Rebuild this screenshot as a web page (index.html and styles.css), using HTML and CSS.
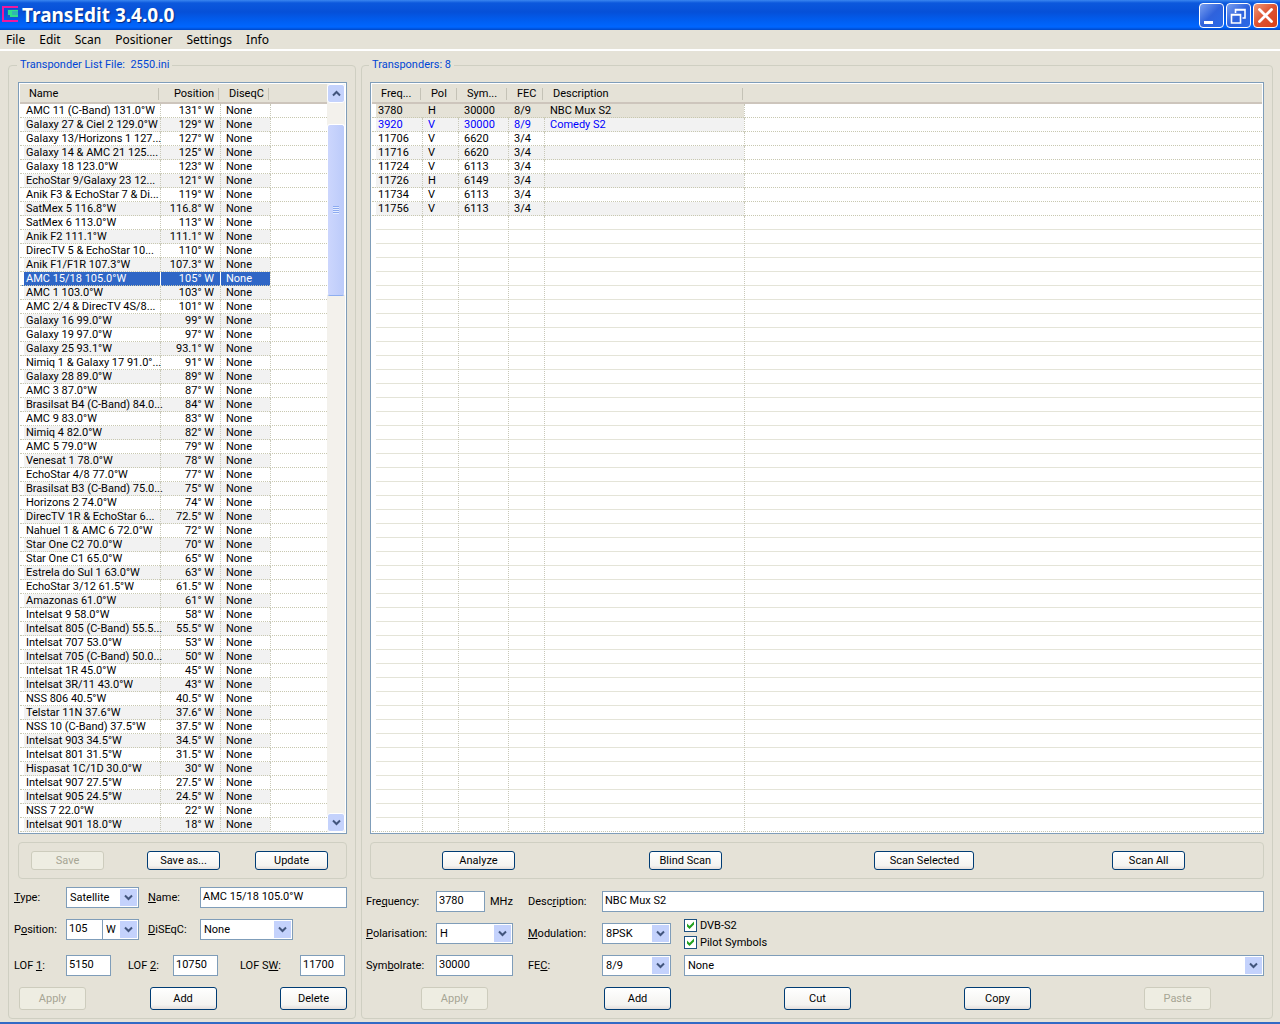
FILE: index.html
```html
<!DOCTYPE html>
<html lang="en">
<head>
<meta charset="utf-8">
<title>TransEdit 3.4.0.0</title>
<link rel="stylesheet" href="styles.css">
</head>
<body>
<header class="titlebar">
  <svg class="app-icon" width="16" height="16" viewBox="0 0 16 16"><path d="M16 1H1v14h15" fill="none" stroke="#f0189c" stroke-width="2"/><path d="M5 3h11v9H5z" fill="#1a5ac8"/><path d="M6 4h10v7H8V9H6z" fill="#2ee08c"/><path d="M10 5h6v4h-6z" fill="#30b8b0"/></svg>
  <h1 class="title">TransEdit 3.4.0.0</h1>
  <div class="window-buttons">
    <button type="button" class="winbtn" aria-label="Minimize"><svg width="23" height="23" viewBox="0 0 23 23"><path d="M4 17h9v3H4z" fill="#fff"/></svg></button>
    <button type="button" class="winbtn" aria-label="Restore"><svg width="23" height="23" viewBox="0 0 23 23"><path d="M8.500 9V5.500H18V14h-2.500M8 6h10M4.500 10.500h9V19h-9zM4 11h10" fill="none" stroke="#fff" stroke-width="1.600"/></svg></button>
    <button type="button" class="winbtn close" aria-label="Close"><svg width="23" height="23" viewBox="0 0 23 23"><path d="M5.500 5.500l12 12M17.500 5.500l-12 12" fill="none" stroke="#fff" stroke-width="2.800" stroke-linecap="round"/></svg></button>
  </div>
</header>
<nav class="menubar">
  <a href="#file">File</a><a href="#edit">Edit</a><a href="#scan">Scan</a><a href="#positioner">Positioner</a><a href="#settings">Settings</a><a href="#info">Info</a>
</nav>
<main class="panels">
  <fieldset class="group sat-group">
    <legend>Transponder List File:&nbsp; 2550.ini</legend>
    <div class="listbox">
      <table class="list satellites">
        <colgroup><col class="c-name"><col class="c-pos"><col class="c-diseqc"><col></colgroup>
        <thead><tr><th>Name</th><th class="num">Position</th><th>DiseqC</th><th></th></tr></thead>
        <tbody>
          <tr><td>AMC 11 (C-Band) 131.0°W</td><td>131° W</td><td>None</td><td></td></tr>
          <tr><td>Galaxy 27 &amp; Ciel 2 129.0°W</td><td>129° W</td><td>None</td><td></td></tr>
          <tr><td>Galaxy 13/Horizons 1 127...</td><td>127° W</td><td>None</td><td></td></tr>
          <tr><td>Galaxy 14 &amp; AMC 21 125....</td><td>125° W</td><td>None</td><td></td></tr>
          <tr><td>Galaxy 18 123.0°W</td><td>123° W</td><td>None</td><td></td></tr>
          <tr><td>EchoStar 9/Galaxy 23 12...</td><td>121° W</td><td>None</td><td></td></tr>
          <tr><td>Anik F3 &amp; EchoStar 7 &amp; Di...</td><td>119° W</td><td>None</td><td></td></tr>
          <tr><td>SatMex 5 116.8°W</td><td>116.8° W</td><td>None</td><td></td></tr>
          <tr><td>SatMex 6 113.0°W</td><td>113° W</td><td>None</td><td></td></tr>
          <tr><td>Anik F2 111.1°W</td><td>111.1° W</td><td>None</td><td></td></tr>
          <tr><td>DirecTV 5 &amp; EchoStar 10...</td><td>110° W</td><td>None</td><td></td></tr>
          <tr><td>Anik F1/F1R 107.3°W</td><td>107.3° W</td><td>None</td><td></td></tr>
          <tr class="selected"><td>AMC 15/18 105.0°W</td><td>105° W</td><td>None</td><td></td></tr>
          <tr><td>AMC 1 103.0°W</td><td>103° W</td><td>None</td><td></td></tr>
          <tr><td>AMC 2/4 &amp; DirecTV 4S/8...</td><td>101° W</td><td>None</td><td></td></tr>
          <tr><td>Galaxy 16 99.0°W</td><td>99° W</td><td>None</td><td></td></tr>
          <tr><td>Galaxy 19 97.0°W</td><td>97° W</td><td>None</td><td></td></tr>
          <tr><td>Galaxy 25 93.1°W</td><td>93.1° W</td><td>None</td><td></td></tr>
          <tr><td>Nimiq 1 &amp; Galaxy 17 91.0°...</td><td>91° W</td><td>None</td><td></td></tr>
          <tr><td>Galaxy 28 89.0°W</td><td>89° W</td><td>None</td><td></td></tr>
          <tr><td>AMC 3 87.0°W</td><td>87° W</td><td>None</td><td></td></tr>
          <tr><td>Brasilsat B4 (C-Band) 84.0...</td><td>84° W</td><td>None</td><td></td></tr>
          <tr><td>AMC 9 83.0°W</td><td>83° W</td><td>None</td><td></td></tr>
          <tr><td>Nimiq 4 82.0°W</td><td>82° W</td><td>None</td><td></td></tr>
          <tr><td>AMC 5 79.0°W</td><td>79° W</td><td>None</td><td></td></tr>
          <tr><td>Venesat 1 78.0°W</td><td>78° W</td><td>None</td><td></td></tr>
          <tr><td>EchoStar 4/8 77.0°W</td><td>77° W</td><td>None</td><td></td></tr>
          <tr><td>Brasilsat B3 (C-Band) 75.0...</td><td>75° W</td><td>None</td><td></td></tr>
          <tr><td>Horizons 2 74.0°W</td><td>74° W</td><td>None</td><td></td></tr>
          <tr><td>DirecTV 1R &amp; EchoStar 6...</td><td>72.5° W</td><td>None</td><td></td></tr>
          <tr><td>Nahuel 1 &amp; AMC 6 72.0°W</td><td>72° W</td><td>None</td><td></td></tr>
          <tr><td>Star One C2 70.0°W</td><td>70° W</td><td>None</td><td></td></tr>
          <tr><td>Star One C1 65.0°W</td><td>65° W</td><td>None</td><td></td></tr>
          <tr><td>Estrela do Sul 1 63.0°W</td><td>63° W</td><td>None</td><td></td></tr>
          <tr><td>EchoStar 3/12 61.5°W</td><td>61.5° W</td><td>None</td><td></td></tr>
          <tr><td>Amazonas 61.0°W</td><td>61° W</td><td>None</td><td></td></tr>
          <tr><td>Intelsat 9 58.0°W</td><td>58° W</td><td>None</td><td></td></tr>
          <tr><td>Intelsat 805 (C-Band) 55.5...</td><td>55.5° W</td><td>None</td><td></td></tr>
          <tr><td>Intelsat 707 53.0°W</td><td>53° W</td><td>None</td><td></td></tr>
          <tr><td>Intelsat 705 (C-Band) 50.0...</td><td>50° W</td><td>None</td><td></td></tr>
          <tr><td>Intelsat 1R 45.0°W</td><td>45° W</td><td>None</td><td></td></tr>
          <tr><td>Intelsat 3R/11 43.0°W</td><td>43° W</td><td>None</td><td></td></tr>
          <tr><td>NSS 806 40.5°W</td><td>40.5° W</td><td>None</td><td></td></tr>
          <tr><td>Telstar 11N 37.6°W</td><td>37.6° W</td><td>None</td><td></td></tr>
          <tr><td>NSS 10 (C-Band) 37.5°W</td><td>37.5° W</td><td>None</td><td></td></tr>
          <tr><td>Intelsat 903 34.5°W</td><td>34.5° W</td><td>None</td><td></td></tr>
          <tr><td>Intelsat 801 31.5°W</td><td>31.5° W</td><td>None</td><td></td></tr>
          <tr><td>Hispasat 1C/1D 30.0°W</td><td>30° W</td><td>None</td><td></td></tr>
          <tr><td>Intelsat 907 27.5°W</td><td>27.5° W</td><td>None</td><td></td></tr>
          <tr><td>Intelsat 905 24.5°W</td><td>24.5° W</td><td>None</td><td></td></tr>
          <tr><td>NSS 7 22.0°W</td><td>22° W</td><td>None</td><td></td></tr>
          <tr><td>Intelsat 901 18.0°W</td><td>18° W</td><td>None</td><td></td></tr>
        </tbody>
      </table>
      <div class="scrollbar">
        <button type="button" class="scroll-btn" aria-label="Scroll up"><svg width="9" height="7" viewBox="0 0 9 7"><path d="M1 5.500L4.500 2 8 5.500" fill="none" stroke="#42557d" stroke-width="2"/></svg></button>
        <div class="track"><div class="thumb"><span class="grip"></span></div></div>
        <button type="button" class="scroll-btn" aria-label="Scroll down"><svg width="9" height="7" viewBox="0 0 9 7"><path d="M1 1.500L4.500 5 8 1.500" fill="none" stroke="#42557d" stroke-width="2"/></svg></button>
      </div>
    </div>
    <div class="toolbar list-tools">
      <button type="button" class="btn" disabled>Save</button>
      <button type="button" class="btn">Save as...</button>
      <button type="button" class="btn">Update</button>
    </div>
    <form class="form sat-form">
      <div class="row names">
        <label for="type"><u>T</u>ype:</label>
        <span class="combo"><select id="type"><option>Satellite</option></select><svg class="arrow" width="17" height="17" viewBox="0 0 17 17"><path d="M5 6.500L8.500 10 12 6.500" fill="none" stroke="#42557d" stroke-width="2"/></svg></span>
        <label for="name"><u>N</u>ame:</label>
        <input id="name" type="text" value="AMC 15/18 105.0°W">
      </div>
      <div class="row places">
        <label for="position">P<u>o</u>sition:</label>
        <span class="pair"><input id="position" type="text" value="105"><span class="combo tight"><select aria-label="Direction"><option>W</option></select><svg class="arrow" width="17" height="17" viewBox="0 0 17 17"><path d="M5 6.500L8.500 10 12 6.500" fill="none" stroke="#42557d" stroke-width="2"/></svg></span></span>
        <label for="diseqc"><u>D</u>iSEqC:</label>
        <span class="combo"><select id="diseqc"><option>None</option></select><svg class="arrow" width="17" height="17" viewBox="0 0 17 17"><path d="M5 6.500L8.500 10 12 6.500" fill="none" stroke="#42557d" stroke-width="2"/></svg></span>
      </div>
      <div class="row lofs">
        <label for="lof1">LOF <u>1</u>:</label><input id="lof1" type="text" value="5150">
        <label for="lof2">LOF <u>2</u>:</label><input id="lof2" type="text" value="10750">
        <label for="lofsw">LOF S<u>W</u>:</label><input id="lofsw" type="text" value="11700">
      </div>
      <div class="row actions">
        <button type="button" class="btn" disabled>Apply</button>
        <button type="button" class="btn">Add</button>
        <button type="button" class="btn">Delete</button>
      </div>
    </form>
  </fieldset>

  <fieldset class="group">
    <legend>Transponders: 8</legend>
    <div class="listbox">
      <table class="list transponders">
        <colgroup><col class="c-freq"><col class="c-pol"><col class="c-sym"><col class="c-fec"><col class="c-desc"><col></colgroup>
        <thead><tr><th>Freq...</th><th>Pol</th><th>Sym...</th><th>FEC</th><th>Description</th><th></th></tr></thead>
        <tbody>
          <tr class="inactive"><td>3780</td><td>H</td><td>30000</td><td>8/9</td><td>NBC Mux S2</td><td></td></tr>
          <tr class="marked"><td>3920</td><td>V</td><td>30000</td><td>8/9</td><td>Comedy S2</td><td></td></tr>
          <tr><td>11706</td><td>V</td><td>6620</td><td>3/4</td><td></td><td></td></tr>
          <tr><td>11716</td><td>V</td><td>6620</td><td>3/4</td><td></td><td></td></tr>
          <tr><td>11724</td><td>V</td><td>6113</td><td>3/4</td><td></td><td></td></tr>
          <tr><td>11726</td><td>H</td><td>6149</td><td>3/4</td><td></td><td></td></tr>
          <tr><td>11734</td><td>V</td><td>6113</td><td>3/4</td><td></td><td></td></tr>
          <tr><td>11756</td><td>V</td><td>6113</td><td>3/4</td><td></td><td></td></tr>
          <tr class="filler"><td></td><td></td><td></td><td></td><td></td><td></td></tr>
        </tbody>
      </table>
    </div>
    <div class="toolbar scan-tools">
      <button type="button" class="btn">Analyze</button>
      <button type="button" class="btn">Blind Scan</button>
      <button type="button" class="btn wide">Scan Selected</button>
      <button type="button" class="btn">Scan All</button>
    </div>
    <form class="form tp-form">
      <div class="fields">
        <label for="freq">Fre<u>q</u>uency:</label>
        <span class="unit"><input id="freq" type="text" value="3780"><span>MHz</span></span>
        <label class="second" for="desc">Desc<u>r</u>iption:</label>
        <input id="desc" class="span-rest" type="text" value="NBC Mux S2">

        <label for="pol"><u>P</u>olarisation:</label>
        <span class="combo"><select id="pol"><option>H</option></select><svg class="arrow" width="17" height="17" viewBox="0 0 17 17"><path d="M5 6.500L8.500 10 12 6.500" fill="none" stroke="#42557d" stroke-width="2"/></svg></span>
        <label class="second" for="mod"><u>M</u>odulation:</label>
        <span class="combo"><select id="mod"><option>8PSK</option></select><svg class="arrow" width="17" height="17" viewBox="0 0 17 17"><path d="M5 6.500L8.500 10 12 6.500" fill="none" stroke="#42557d" stroke-width="2"/></svg></span>
        <span class="checks">
          <label class="check"><input type="checkbox" checked>DVB-S2</label>
          <label class="check"><input type="checkbox" checked>Pilot Symbols</label>
        </span>

        <label for="sym">Sym<u>b</u>olrate:</label>
        <input id="sym" type="text" value="30000">
        <label class="second" for="fec">FE<u>C</u>:</label>
        <span class="combo"><select id="fec"><option>8/9</option></select><svg class="arrow" width="17" height="17" viewBox="0 0 17 17"><path d="M5 6.500L8.500 10 12 6.500" fill="none" stroke="#42557d" stroke-width="2"/></svg></span>
        <span class="combo last"><select aria-label="Provider"><option>None</option></select><svg class="arrow" width="17" height="17" viewBox="0 0 17 17"><path d="M5 6.500L8.500 10 12 6.500" fill="none" stroke="#42557d" stroke-width="2"/></svg></span>
      </div>
      <div class="tp-actions">
        <button type="button" class="btn" disabled>Apply</button>
        <button type="button" class="btn">Add</button>
        <button type="button" class="btn">Cut</button>
        <button type="button" class="btn">Copy</button>
        <button type="button" class="btn" disabled>Paste</button>
      </div>
    </form>
  </fieldset>
</main>
</body>
</html>
```
FILE: styles.css
```css
* { box-sizing: border-box; }
body {
  margin: 0;
  background: #e5e2d7;
  border-bottom: 2px solid #316ac5;
  color: #000;
  font: 11px/13px Roboto, "Liberation Sans", sans-serif;
}
button, input, select { font: inherit; color: inherit; margin: 0; border-radius: 0; }

/* title bar */
.titlebar {
  display: flex;
  align-items: center;
  height: 30px;
  padding: 0 2px;
  background: linear-gradient(#3a86f0 0, #0c58dc 3px, #0650d8 12px, #0060f4 22px, #0066ff 27px, #0048c8 100%);
}
.app-icon { margin-bottom: 3px; }
.title {
  flex: 1;
  margin: 0 0 0 4px;
  color: #fff;
  font: bold 19px/24px "Noto Sans", "Open Sans", sans-serif;
  text-shadow: 1px 1px 1px #0a2a80;
}
.window-buttons { display: flex; gap: 2px; }
.winbtn {
  width: 25px;
  height: 25px;
  padding: 0;
  border: 1px solid #fff;
  border-radius: 4px;
  background: linear-gradient(135deg, #7aa0f0, #2f62dc 50%, #2a6ae8);
}
.winbtn svg { display: block; }
.winbtn.close { background: linear-gradient(135deg, #f09878, #dd5230 50%, #d84018); }

/* menu */
.menubar {
  display: flex;
  gap: 14px;
  padding: 0 6px;
  border-bottom: 2px solid #fff;
  font: 12px/19px "Noto Sans", "Open Sans", sans-serif;
}
.menubar a { color: #000; text-decoration: none; }

/* panels */
.panels {
  display: grid;
  grid-template-columns: 348px minmax(0, 1fr);
  gap: 5px;
  padding: 7px 7px 3px 8px;
}
.group {
  display: flex;
  flex-direction: column;
  min-width: 0;
  margin: 0;
  padding: 10px 0 8px;
  border: 1px solid #cfcfc2;
  border-radius: 4px;
}
.sat-group { padding-left: 1px; }
.group > legend { margin-left: 7px; padding: 0 3px; color: #0046d5; line-height: 14px; }

/* list views */
.listbox {
  display: flex;
  flex: 1;
  min-height: 752px;
  margin: 0 8px;
  padding: 1px;
  border: 1px solid #7f9db9;
  background: #fff;
}
.list {
  flex: 1;
  min-width: 0;
  width: 100%;
  table-layout: fixed;
  border-collapse: separate;
  border-spacing: 0;
}
.c-name { width: 140px; }
.c-pos { width: 60px; }
.c-diseqc, .c-freq, .c-sym { width: 50px; }
.c-pol, .c-fec { width: 36px; }
.c-desc { width: 200px; }
.list th {
  height: 20px;
  padding: 0 4px 0 9px;
  border-bottom: 2px solid #cdc5bc;
  background: linear-gradient(#c4c2b6, #c4c2b6) right 1px top 4px / 1px 12px no-repeat #e5e2d7;
  font-weight: normal;
  text-align: left;
  white-space: nowrap;
}
.list th:last-child { background: #e5e2d7; }
.list .num { text-align: right; }
.list td {
  height: 14px;
  padding: 0 0 0 5px;
  border-left: 1px dotted #c8c8b8;
  border-bottom: 1px dotted #c8c8b0;
  white-space: nowrap;
}
.list td:first-child { padding-left: 6px; border-left: 0; box-shadow: inset 4px 0 #fff; }
.list tr:nth-child(even) td:not(:last-child) { background: #f2f2f2; }
.satellites td:nth-child(2), .satellites .num { padding-right: 6px; text-align: right; }
.list tr.selected td:not(:last-child) { border-left-color: #fff; border-left-style: solid; background: #2f66c6; color: #fff; }
.list tr.inactive td:not(:last-child) { border-left-color: transparent; background: #e5e2d7; }
.list tr.marked td { color: #00f; }
.list tr.filler td:nth-child(n) {
  height: auto;
  background: repeating-linear-gradient(transparent 0 13px, #e4e4d8 13px 14px);
}

.scrollbar { display: flex; flex-direction: column; width: 18px; background: #f3f1ec; }
.scroll-btn {
  display: grid;
  place-items: center;
  height: 19px;
  padding: 0;
  border: 1px solid #fff;
  border-radius: 3px;
  background: #c4d2fc;
}
.track { flex: 1; padding-top: 21px; }
.thumb {
  display: grid;
  place-items: center;
  height: 172px;
  border: 1px solid #fff;
  border-bottom-color: #8eaef0;
  border-radius: 3px;
  background: linear-gradient(90deg, #ccd6fd, #bccbfa);
}
.grip { width: 6px; height: 8px; background: repeating-linear-gradient(#8caaf0 0 1px, #e4ecff 1px 2px); }

/* buttons */
.btn {
  width: 67px;
  height: 23px;
  padding: 0;
  border: 1px solid #003c74;
  border-radius: 3px;
  background: linear-gradient(#fff, #f4f3f0 80%, #e4dedc);
}
.btn:disabled { border-color: #cdccbd; background: #eeede2; color: #a6a594; }
.toolbar {
  margin: 8px 8px 0;
  padding: 8px 0;
  border: 1px solid #cfcfc2;
  border-radius: 4px;
}
.toolbar .btn { width: 73px; height: 19px; }
.toolbar .btn.wide { width: 100px; }
.list-tools { display: grid; grid-template-columns: 116px 108px 1fr; padding-left: 12px; }
.scan-tools { display: grid; grid-template-columns: 207fr 226fr 238fr 151fr; padding-left: 71px; }

/* forms */
.form { margin: 0 8px 0 4px; }
.form input[type="text"], .form select {
  display: block;
  width: 100%;
  min-width: 0;
  height: 21px;
  padding: 0 2px 2px 2px;
  border: 1px solid #7f9db9;
  background: #fff;
  outline: 0;
}
.form select { appearance: none; padding: 0 18px 0 3px; }
.combo { position: relative; display: block; }
.arrow { position: absolute; top: 2px; right: 2px; background: #c4d2fc; pointer-events: none; }
.row { display: grid; align-items: center; }
.sat-form { display: grid; padding-top: 8px; }
.sat-form .names { grid-template-columns: 52px 82px 52px 1fr; margin-bottom: 11px; }
.sat-form .places { grid-template-columns: 52px 82px 52px 93px; margin-bottom: 15px; }
.names .combo, .pair { margin-right: 9px; }
.pair { display: grid; grid-template-columns: 36px 37px; }
.form .pair input { border-right: 0; }
.form .tight select { padding-right: 0; }
.sat-form .lofs { grid-template-columns: 52px 62px 45px 67px 60px 1fr; margin-bottom: 11px; }
.form .lofs input { width: 45px; }
.sat-form .actions { display: flex; justify-content: space-between; padding-left: 5px; }

.tp-form { padding-top: 12px; }
.fields {
  display: grid;
  grid-template-columns: 70px 77px 15px 74px 69px 13px minmax(0, 1fr);
  row-gap: 11px;
  align-items: center;
}
.second { grid-column: 4; }
.unit { display: grid; grid-template-columns: 49px 28px; column-gap: 5px; align-items: center; }
.span-rest { grid-column: 5 / -1; }
.checks { grid-column: 7; display: grid; gap: 4px; margin: -5px 0; }
.check { display: flex; align-items: center; gap: 3px; }
.check input {
  appearance: none;
  width: 13px;
  height: 13px;
  border: 1px solid #1c5180;
  background: #fff;
}
.check input:checked::before {
  content: "";
  display: block;
  width: 11px;
  height: 11px;
  background: #21a121;
  clip-path: polygon(18% 36%, 41% 59%, 82% 18%, 82% 46%, 41% 86%, 18% 64%);
}
.last { grid-column: 7; }
.tp-actions {
  display: grid;
  grid-template-columns: 183fr 180fr 180fr 180fr 120fr;
  padding: 11px 0 0 55px;
}
```
